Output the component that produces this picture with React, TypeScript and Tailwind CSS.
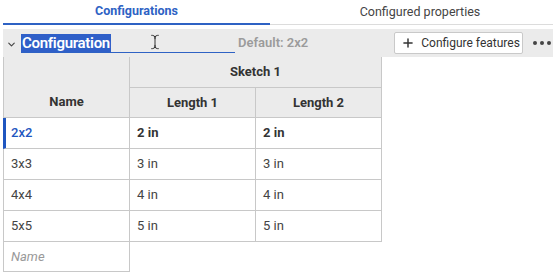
import { Plus, ChevronDown, TextCursor } from 'lucide-react';

const ROWS = [
  { name: '2x2', l1: '2 in', l2: '2 in', active: true },
  { name: '3x3', l1: '3 in', l2: '3 in' },
  { name: '4x4', l1: '4 in', l2: '4 in' },
  { name: '5x5', l1: '5 in', l2: '5 in' },
];

export default function App() {
  return (
    <div
      className="w-[553px] h-[276px] overflow-hidden bg-white text-[#333]"
      style={{ fontFamily: 'Roboto, "Noto Sans", sans-serif' }}
    >
      {/* tabs */}
      <div className="flex h-[25px] pl-[3px]">
        <div className="w-[267px] shrink-0 flex items-center justify-center border-b-2 border-[#2e62c4] text-[12.5px] font-bold text-[#2e62c4]">
          Configurations
        </div>
        <div className="w-[300px] shrink-0 flex items-center justify-center border-b border-[#dcdcdc] text-[12.5px] text-[#444]">
          Configured properties
        </div>
      </div>

      {/* configuration header */}
      <div className="mt-[4px] ml-[3px] h-[28px] bg-[#ebebeb] flex items-center whitespace-nowrap">
        <ChevronDown size={11} strokeWidth={2.5} className="ml-[3px] mt-[3px] text-[#444]" />
        <div className="relative ml-[4px] w-[214px] h-[20px] border-b border-[#2e62c4] flex items-center">
          <span className="bg-[#2f5fc8] text-white text-[15px] tracking-[-0.3px] font-semibold leading-[18px] px-[1px]">
            Configuration
          </span>
          <TextCursor size={16} strokeWidth={1.5} className="absolute left-[126px] top-[1px] text-[#333]" />
        </div>
        <div className="ml-[3px] text-[13px] font-semibold text-[#9b9b9b]">Default: 2x2</div>
        <button className="ml-[86px] shrink-0 h-[22px] w-[129px] bg-white border border-[#c9c9c9] rounded-[2px] flex items-center gap-[6px] pl-[6px] text-[12px] text-[#333]">
          <Plus size={14} strokeWidth={2.5} />
          Configure features
        </button>
        <div className="ml-[10px] flex gap-[3px]">
          <span className="w-[4px] h-[4px] rounded-full bg-[#444]" />
          <span className="w-[4px] h-[4px] rounded-full bg-[#444]" />
          <span className="w-[4px] h-[4px] rounded-full bg-[#444]" />
        </div>
      </div>

      {/* table */}
      <div className="ml-[3px] w-[379px] grid grid-cols-[127px_126px_126px] text-[13px]">
        <div className="row-span-2 bg-[#ebebeb] border-l border-r border-b border-[#c8c8c8] flex flex-col justify-end font-bold">
          <div className="h-[30px] flex items-center justify-center">Name</div>
        </div>
        <div className="col-span-2 h-[31px] bg-[#ebebeb] border-r border-b border-[#c8c8c8] flex items-center justify-center font-bold">
          Sketch 1
        </div>
        <div className="h-[30px] bg-[#ebebeb] border-r border-b border-[#c8c8c8] flex items-center justify-center font-bold">
          Length 1
        </div>
        <div className="h-[30px] bg-[#ebebeb] border-r border-b border-[#c8c8c8] flex items-center justify-center font-bold">
          Length 2
        </div>
        {ROWS.map((r) => (
          <div key={r.name} className="contents">
            <div
              className={`h-[31px] border-r border-b border-[#c8c8c8] flex items-center ${
                r.active ? 'border-l-[3px] border-l-[#1f56c0] pl-[5px] text-[#1f56c0] font-medium' : 'border-l pl-[7px] text-[#444]'
              }`}
            >
              {r.name}
            </div>
            <div className={`h-[31px] border-r border-b border-[#c8c8c8] flex items-center pl-[7px] ${r.active ? 'font-bold' : 'text-[#444]'}`}>
              {r.l1}
            </div>
            <div className={`h-[31px] border-r border-b border-[#c8c8c8] flex items-center pl-[7px] ${r.active ? 'font-bold' : 'text-[#444]'}`}>
              {r.l2}
            </div>
          </div>
        ))}
        <div className="h-[30px] border-l border-r border-b border-[#c8c8c8] flex items-center pl-[7px] italic text-[#999]">
          Name
        </div>
      </div>
    </div>
  );
}
